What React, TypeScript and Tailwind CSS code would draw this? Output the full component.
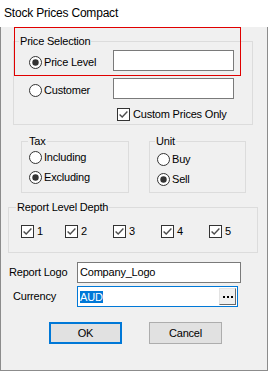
import React from "react";

function Radio({ checked }: { checked?: boolean }) {
  return (
    <svg width="13" height="13" viewBox="0 0 13 13" className="shrink-0">
      <circle cx="6.5" cy="6.5" r="6" fill="#fff" stroke="#333" strokeWidth="1" />
      {checked && <circle cx="6.5" cy="6.5" r="3.2" fill="#333" />}
    </svg>
  );
}

function Check() {
  return (
    <svg width="13" height="13" viewBox="0 0 13 13" className="shrink-0">
      <rect x="0.5" y="0.5" width="12" height="12" fill="#fff" stroke="#333" strokeWidth="1" />
      <polyline points="2.6,6.4 5.2,9 10.4,3.6" fill="none" stroke="#4d4d4d" strokeWidth="1.4" />
    </svg>
  );
}

function RadioOpt({ checked, label }: { checked?: boolean; label: string }) {
  return (
    <div className="flex items-center gap-[2px] h-[14px] leading-[14px]">
      <Radio checked={checked} />
      <span>{label}</span>
    </div>
  );
}

function CheckOpt({ label, w }: { label: string; w: string }) {
  return (
    <div className={`flex items-center gap-[3px] h-[14px] leading-[14px] ${w}`}>
      <Check />
      <span>{label}</span>
    </div>
  );
}

export default function App() {
  return (
    <div className="relative w-[268px] h-[371px] flex flex-col bg-[#f0f0f0] text-black font-['Liberation_Sans',Arial,sans-serif] text-[11px] tracking-[-0.2px]">
      {/* Title bar */}
      <div className="h-[27px] shrink-0 bg-white flex items-center pl-[4px] pb-[1px] text-[12px]">
        Stock Prices Compact
      </div>

      {/* Body */}
      <div className="flex-1 flex flex-col border-l border-r border-b border-[#8c8c8c]">
        {/* Price Selection */}
        <fieldset className="mt-[8px] ml-[12px] w-[240px] border border-[#dcdcdc] pb-[3px]">
          <legend className="ml-[5px] px-[1px] leading-[12px]">Price Selection</legend>
          <div className="mt-[3px] flex items-start">
            <div className="w-[99px] pl-[15px] mt-[5px]">
              <RadioOpt checked label="Price Level" />
            </div>
            <div className="w-[121px] h-[21px] border border-[#7a7a7a] bg-white" />
          </div>
          <div className="mt-[7px] flex items-start">
            <div className="w-[99px] pl-[15px] mt-[5px]">
              <RadioOpt label="Customer" />
            </div>
            <div className="w-[121px] h-[21px] border border-[#7a7a7a] bg-white" />
          </div>
          <div className="mt-[8px] pl-[103px]">
            <div className="flex items-center gap-[3px] h-[14px] leading-[14px]">
              <Check />
              <span>Custom Prices Only</span>
            </div>
          </div>
        </fieldset>

        {/* Tax / Unit */}
        <div className="mt-[10px] flex items-start">
          <fieldset className="ml-[20px] w-[108px] border border-[#dcdcdc] pb-[8px]">
            <legend className="ml-[6px] px-[1px] leading-[12px]">Tax</legend>
            <div className="mt-[3px] pl-[7px] flex flex-col gap-[6px]">
              <RadioOpt label="Including" />
              <RadioOpt checked label="Excluding" />
            </div>
          </fieldset>
          <fieldset className="ml-[20px] w-[97px] border border-[#dcdcdc] pb-[6px]">
            <legend className="ml-[5px] px-[1px] leading-[12px]">Unit</legend>
            <div className="mt-[5px] pl-[7px] flex flex-col gap-[6px]">
              <RadioOpt label="Buy" />
              <RadioOpt checked label="Sell" />
            </div>
          </fieldset>
        </div>

        {/* Report Level Depth */}
        <fieldset className="mt-[8px] ml-[7px] w-[249px] border border-[#dcdcdc] pb-[14px]">
          <legend className="ml-[7px] px-[1px] leading-[12px]">Report Level Depth</legend>
          <div className="mt-[11px] pl-[12px] flex">
            <CheckOpt label="1" w="w-[44px]" />
            <CheckOpt label="2" w="w-[48px]" />
            <CheckOpt label="3" w="w-[48px]" />
            <CheckOpt label="4" w="w-[48px]" />
            <CheckOpt label="5" w="w-[48px]" />
          </div>
        </fieldset>

        {/* Report Logo */}
        <div className="mt-[9px] flex items-center h-[21px]">
          <div className="w-[76px] pl-[8px]">Report Logo</div>
          <div className="w-[164px] h-[21px] border border-[#7a7a7a] bg-white flex items-center pl-[2px]">
            Company_Logo
          </div>
        </div>

        {/* Currency */}
        <div className="mt-[3px] flex items-center h-[21px]">
          <div className="w-[76px] pl-[12px]">Currency</div>
          <div className="w-[161px] h-[21px] border border-[#0078d7] bg-white flex items-center justify-between pl-[2px] pr-[1px]">
            <span className="bg-[#0078d7] text-white leading-[12px] h-[12px]">AUD</span>
            <div className="w-[17px] h-[17px] bg-[#f0f0f0] border border-t-[#e3e3e3] border-l-[#e3e3e3] border-r-[#696969] border-b-[#696969] flex items-center justify-center gap-[2px]">
              <span className="w-[2px] h-[2px] bg-black" />
              <span className="w-[2px] h-[2px] bg-black" />
              <span className="w-[2px] h-[2px] bg-black" />
            </div>
          </div>
        </div>

        {/* Buttons */}
        <div className="mt-[15px] pl-[48px] flex gap-[27px]">
          <div className="w-[73px] h-[22px] border-2 border-[#0078d7] bg-[#e1e1e1] flex items-center justify-center">
            OK
          </div>
          <div className="w-[73px] h-[22px] border border-[#adadad] bg-[#e1e1e1] flex items-center justify-center">
            Cancel
          </div>
        </div>
      </div>

      {/* Red highlight annotation */}
      <div className="absolute left-[14px] top-[27px] w-[227px] h-[49px] border border-[#e00000] pointer-events-none" />
    </div>
  );
}
